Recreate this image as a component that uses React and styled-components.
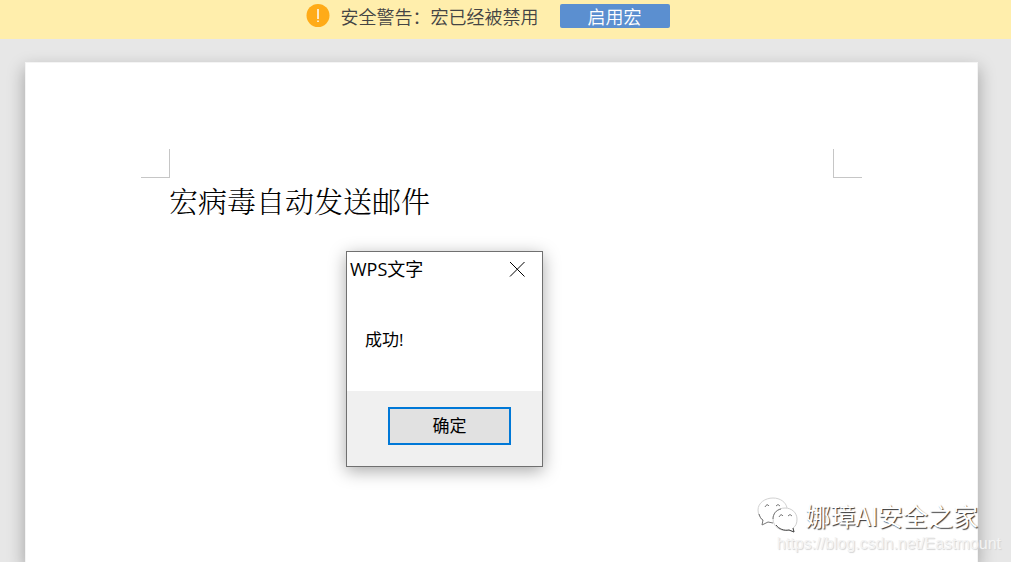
import React from "react";
import styled, { createGlobalStyle } from "styled-components";

const GlobalStyle = createGlobalStyle`
  *, *::before, *::after { box-sizing: border-box; }
  body {
    margin: 0;
    background: #e7e7e7;
    font-family: "Open Sans", "Noto Sans CJK SC", sans-serif;
  }
  button { font: inherit; cursor: pointer; }
`;

const Workspace = styled.div`
  display: flex;
  flex-direction: column;
  height: 100vh;
  overflow: hidden;
`;

const WarningBar = styled.div`
  position: relative;
  z-index: 1;
  display: flex;
  justify-content: center;
  align-items: flex-start;
  flex: none;
  height: 39px;
  padding: 4px 36px 0 0;
  background: #ffeeac;
  color: #444;
  font-family: "Noto Sans CJK SC", sans-serif;
  font-size: 18px;
  font-weight: 350;
  line-height: 24px;
`;

const WarningIcon = styled.svg`
  width: 24px;
  height: 24px;
  margin-right: 11px;
`;

const EnableButton = styled.button`
  width: 110px;
  height: 24px;
  margin-left: 21px;
  padding: 0;
  border: 0;
  border-radius: 2px;
  background: #5b8fd0;
  color: #fff;
  line-height: 24px;
`;

const Page = styled.main`
  flex: 1;
  margin: 23px 33px 0 25px;
  padding: 86px 116px 0;
  border: 1px solid #f4f4f4;
  border-bottom: 0;
  background: #fff;
  box-shadow: 0 7px 16px 1px rgba(0, 0, 0, 0.28);
`;

const MarginMarks = styled.div`
  display: flex;
  justify-content: space-between;
  margin: 0 -1px;
`;

const Mark = styled.span`
  width: 29px;
  height: 29px;
  border-bottom: 1px solid #c6c6c6;
  ${({ $side }) => ($side === "left" ? "border-right" : "border-left")}: 1px solid #c6c6c6;
`;

const Heading = styled.h1`
  margin: 3px 0 0 27px;
  color: #000;
  font-family: "Noto Serif CJK SC", "Noto Sans CJK SC", serif;
  font-size: 29px;
  font-weight: 300;
  line-height: 40px;
`;

const Dialog = styled.section`
  position: absolute;
  z-index: 2;
  top: 251px;
  left: 346px;
  width: 197px;
  border: 1px solid #707070;
  background: #fff;
  box-shadow: 0 4px 16px rgba(0, 0, 0, 0.34);
  color: #000;
`;

const DialogHeader = styled.header`
  display: flex;
  align-items: center;
  justify-content: space-between;
  height: 34px;
  padding: 0 9px 0 3px;
`;

const DialogTitle = styled.h2`
  margin: 0;
  font-size: 18px;
  font-weight: 400;
  line-height: 24px;
`;

const CloseButton = styled.button`
  display: grid;
  place-items: center;
  width: 32px;
  height: 32px;
  padding: 0;
  border: 0;
  background: transparent;
`;

const Message = styled.p`
  height: 105px;
  margin: 0;
  padding: 42px 18px 0;
  font-size: 17px;
  line-height: 24px;
`;

const DialogFooter = styled.footer`
  display: flex;
  justify-content: flex-end;
  padding: 16px 31px 21px;
  background: #f0f0f0;
`;

const OkButton = styled.button`
  width: 123px;
  height: 38px;
  padding: 0;
  border: 2px solid #0078d7;
  background: #e1e1e1;
  color: #000;
  font-size: 17px;
  line-height: 24px;
`;

const Watermark = styled.div`
  position: absolute;
  z-index: 1;
  right: 10px;
  bottom: 8px;
  display: flex;
  flex-direction: column;
  align-items: flex-end;
`;

const Account = styled.div`
  display: flex;
  align-items: center;
  gap: 6px;
  margin-right: 23px;
  color: #fff;
  font-family: "Noto Sans CJK SC", sans-serif;
  font-size: 25px;
  line-height: 36px;
  text-shadow: 1px 1px 1px #333;
`;

const BlogLink = styled.a`
  color: #f4f4f4;
  font-family: "Liberation Sans", sans-serif;
  font-size: 16px;
  line-height: 20px;
  text-decoration: none;
  text-shadow: 1px 1px 1px #d4d4d4;
`;

function ChatLogo() {
  return (
    <svg width="42" height="38" viewBox="0 0 42 38" fill="none" aria-hidden="true">
      <path d="M6 25C3 22 1 18 1 14C1 7 8 2 16 2C23 2 29 6 30 12" stroke="#d2d2d2" />
      <path d="M2 18C3 21 4 23 6 24L5 29L11 26L16 27" stroke="#777" />
      <path d="M16 23C16 17 21 12 28 12C35 12 40 17 40 23C40 27 39 30 36 32L37 36L32 34C24 36 16 31 16 23Z" fill="#fff" stroke="#cfcfcf" />
      <path d="M19 29C22 33 27 35 32 34L37 36L36 32" stroke="#444" />
      <path d="M16 23C16 18 19 14 24 13" stroke="#777" />
      <path d="M8 11Q10 7 12 10M19 10Q21 7 23 10M22 21Q24 17 26 20M31 20Q33 17 35 20" stroke="#777" />
    </svg>
  );
}

export default function App() {
  return (
    <Workspace>
      <GlobalStyle />
      <WarningBar role="alert">
        <WarningIcon viewBox="0 0 24 24" aria-hidden="true">
          <circle cx="12" cy="11.5" r="11.5" fill="#ffab18" />
          <path d="M12 5V15M12 16.5V18" stroke="#fff" strokeWidth="1.5" />
        </WarningIcon>
        <span>安全警告：宏已经被禁用</span>
        <EnableButton type="button">启用宏</EnableButton>
      </WarningBar>
      <Page>
        <MarginMarks aria-hidden="true">
          <Mark $side="left" />
          <Mark $side="right" />
        </MarginMarks>
        <Heading>宏病毒自动发送邮件</Heading>
      </Page>
      <Dialog role="dialog" aria-labelledby="dialog-title">
        <DialogHeader>
          <DialogTitle id="dialog-title">WPS文字</DialogTitle>
          <CloseButton type="button" aria-label="关闭">
            <svg width="16" height="16" viewBox="0 0 16 16" aria-hidden="true">
              <path d="M1 1L15.5 15.5M15.5 1L1 15.5" stroke="#000" strokeWidth="1" />
            </svg>
          </CloseButton>
        </DialogHeader>
        <Message>成功!</Message>
        <DialogFooter>
          <OkButton type="button">确定</OkButton>
        </DialogFooter>
      </Dialog>
      <Watermark>
        <Account>
          <ChatLogo />
          <span>娜璋AI安全之家</span>
        </Account>
        <BlogLink href="https://blog.csdn.net/Eastmount">https://blog.csdn.net/Eastmount</BlogLink>
      </Watermark>
    </Workspace>
  );
}
